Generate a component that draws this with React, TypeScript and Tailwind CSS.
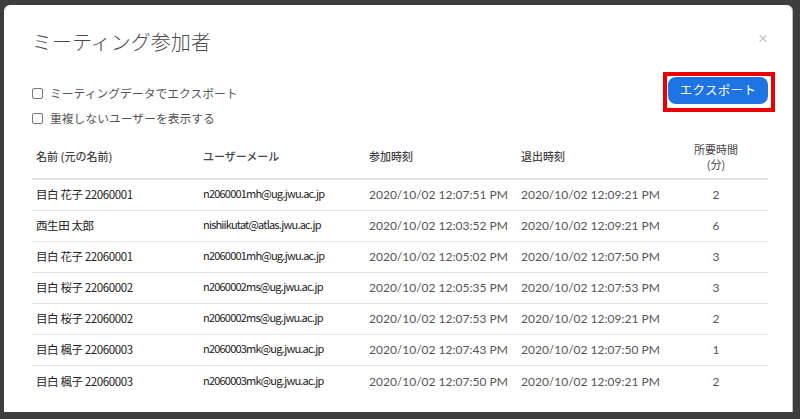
import React from 'react'

const rows = [
  { name: '目白 花子 22060001', email: 'n2060001mh@ug.jwu.ac.jp', join: '2020/10/02 12:07:51 PM', leave: '2020/10/02 12:09:21 PM', min: 2 },
  { name: '西生田 太郎', email: 'nishiikutat@atlas.jwu.ac.jp', join: '2020/10/02 12:03:52 PM', leave: '2020/10/02 12:09:21 PM', min: 6 },
  { name: '目白 花子 22060001', email: 'n2060001mh@ug.jwu.ac.jp', join: '2020/10/02 12:05:02 PM', leave: '2020/10/02 12:07:50 PM', min: 3 },
  { name: '目白 桜子 22060002', email: 'n2060002ms@ug.jwu.ac.jp', join: '2020/10/02 12:05:35 PM', leave: '2020/10/02 12:07:53 PM', min: 3 },
  { name: '目白 桜子 22060002', email: 'n2060002ms@ug.jwu.ac.jp', join: '2020/10/02 12:07:53 PM', leave: '2020/10/02 12:09:21 PM', min: 2 },
  { name: '目白 楓子 22060003', email: 'n2060003mk@ug.jwu.ac.jp', join: '2020/10/02 12:07:43 PM', leave: '2020/10/02 12:07:50 PM', min: 1 },
  { name: '目白 楓子 22060003', email: 'n2060003mk@ug.jwu.ac.jp', join: '2020/10/02 12:07:50 PM', leave: '2020/10/02 12:09:21 PM', min: 2 },
]

const jp = "font-['Noto_Sans_CJK_JP',sans-serif]"
const lato = "font-['Lato','Noto_Sans_CJK_JP',sans-serif]"

export default function App() {
  return (
    <div className="w-[800px] h-[419px] bg-[#3e3e3e] pt-[5px] pl-[4px] overflow-hidden">
      <div className="w-[789px] h-[407px] bg-white rounded-t-[6px] border-r border-[#bdbdbd] relative">
        <button className="absolute right-[24px] top-[25px] text-[#c4c4c4] text-[17px] leading-none font-['Liberation_Sans',sans-serif]">×</button>

        <div className="pl-[28px] pr-[21px]">
          <h1 className={`${jp} pt-[23px] text-[20px] leading-[28px] font-light text-[#4a4a4a]`}>ミーティング参加者</h1>

          <div className="flex justify-between items-start mt-[16px]">
            <div className={`${jp} flex flex-col gap-[7px] pt-[12px] text-[11.8px] text-[#555] leading-[18px]`}>
              <label className="flex items-center gap-[7px]">
                <span className="w-[11px] h-[11px] border border-[#777] rounded-[2px]" />
                ミーティングデータでエクスポート
              </label>
              <label className="flex items-center gap-[7px]">
                <span className="w-[11px] h-[11px] border border-[#777] rounded-[2px]" />
                重複しないユーザーを表示する
              </label>
            </div>
            <div className="border-[4px] border-[#ee0000] pt-[1px] pb-[4px] pl-[1px] pr-[3px] mr-[-4px]">
              <button className={`${jp} block w-[100px] h-[27px] rounded-[8px] bg-[#1f74e3] text-white text-[12.5px] tracking-[0.3px]`}>エクスポート</button>
            </div>
          </div>

          <div className="mt-[7px] w-[736px]">
            <div className={`${jp} flex items-center h-[46px] border-b-2 border-[#e2e2e2] text-[11px] font-medium text-[#444]`}>
              <div className="w-[171px] pl-[4px]">名前 (元の名前)</div>
              <div className="w-[166px]">ユーザーメール</div>
              <div className="w-[152px]">参加時刻</div>
              <div className="w-[159px]">退出時刻</div>
              <div className="w-[72px] text-center leading-[15px] pt-[1px] font-normal">所要時間<br />(分)</div>
            </div>
            {rows.map((r, i) => (
              <div key={i} className={`flex items-center h-[31px] ${i < rows.length - 1 ? 'border-b border-[#e5e5e5]' : ''}`}>
                <div className={`${jp} w-[171px] pl-[4px] text-[11.5px] tracking-[-0.4px] text-[#222]`}>{r.name}</div>
                <div className={`${jp} w-[166px] text-[11px] tracking-[-0.8px] text-[#222] -mt-[3px]`}>{r.email}</div>
                <div className={`${lato} w-[152px] text-[12px] text-[#555]`}>{r.join}</div>
                <div className={`${lato} w-[159px] text-[12px] text-[#555]`}>{r.leave}</div>
                <div className={`${lato} w-[72px] text-center text-[12px] text-[#555]`}>{r.min}</div>
              </div>
            ))}
          </div>
        </div>
      </div>
    </div>
  )
}
